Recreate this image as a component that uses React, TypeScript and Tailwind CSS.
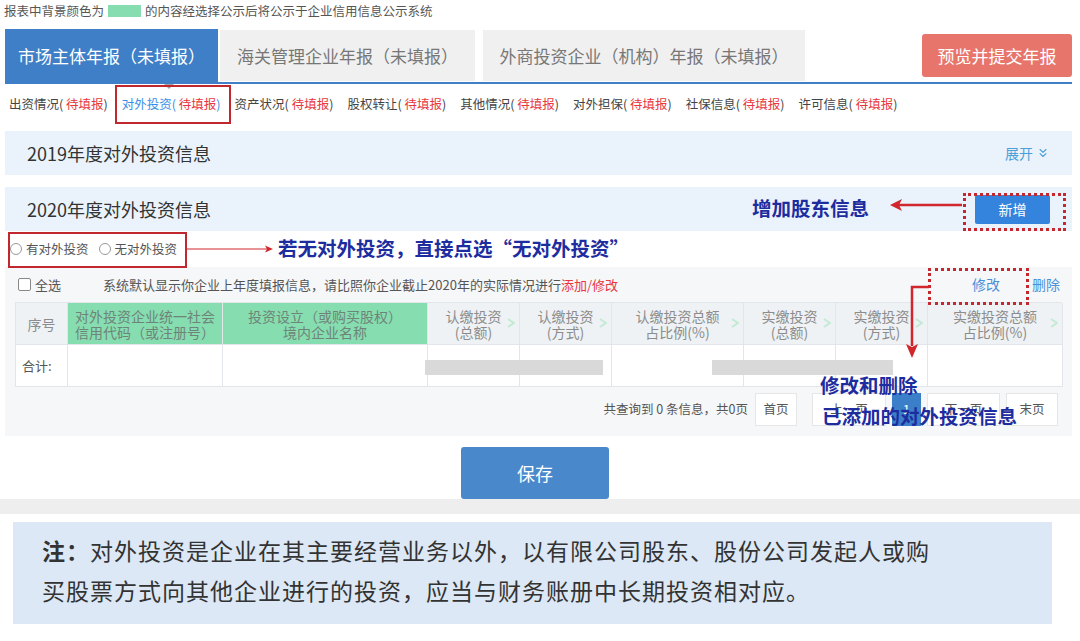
import { ChevronsDown } from 'lucide-react'

const subNav = ['出资情况', '对外投资', '资产状况', '股权转让', '其他情况', '对外担保', '社保信息', '许可信息']

const columns = [
  { lines: ['序号'], green: false, sort: false },
  { lines: ['对外投资企业统一社会', '信用代码（或注册号）'], green: true, sort: false },
  { lines: ['投资设立（或购买股权）', '境内企业名称'], green: true, sort: false },
  { lines: ['认缴投资', '(总额)'], green: false, sort: true },
  { lines: ['认缴投资', '(方式)'], green: false, sort: true },
  { lines: ['认缴投资总额', '占比例(%)'], green: false, sort: true },
  { lines: ['实缴投资', '(总额)'], green: false, sort: true },
  { lines: ['实缴投资', '(方式)'], green: false, sort: true },
  { lines: ['实缴投资总额', '占比例(%)'], green: false, sort: true },
]

const annoText = 'absolute whitespace-nowrap text-[19.5px] font-bold leading-[24px] text-[#1d2c9e]'

function SortMark() {
  return (
    <svg className="absolute right-[4px] top-[15px]" width="8" height="10" viewBox="0 0 8 10">
      <path d="M1 1 L7 5 L1 9" fill="none" stroke="#c3ead3" strokeWidth="2" />
    </svg>
  )
}

export default function App() {
  return (
    <div className="relative h-[641px] w-[1080px] overflow-hidden bg-white font-['Noto_Sans_CJK_SC',sans-serif] text-[#333]">
      <div className="pl-[5px] pr-[8px]">
        {/* 顶部说明 */}
        <div className="flex h-[22px] items-center text-[12.5px] text-[#555]">
          <span className="-ml-[1px]">报表中背景颜色为</span>
          <span className="ml-[4px] mr-[4px] inline-block h-[12px] w-[33px] bg-[#86ddb0]" />
          <span>的内容经选择公示后将公示于企业信用信息公示系统</span>
        </div>

        {/* 年报标签 */}
        <div className="mt-[7px] flex h-[55px] border-b-2 border-[#3f7fc8]">
          <div className="flex w-[213px] items-center justify-center bg-[#3f7fc8] text-[17px] text-white">
            市场主体年报（未填报）
          </div>
          <div className="ml-[2px] mt-[1px] flex h-[51px] w-[255px] items-center justify-center bg-[#f0f0f0] text-[17px] text-[#777]">
            海关管理企业年报（未填报）
          </div>
          <div className="ml-[8px] mt-[1px] flex h-[51px] w-[322px] items-center justify-center bg-[#f0f0f0] text-[17px] text-[#777]">
            外商投资企业（机构）年报（未填报）
          </div>
          <button
            type="button"
            className="ml-auto mt-[5px] h-[43px] w-[150px] rounded-[3px] bg-[#e8756c] text-[17px] text-white"
          >
            预览并提交年报
          </button>
        </div>

        {/* 子栏目 */}
        <div className="flex h-[41px] items-center gap-[14px] pl-[4px] text-[12.5px] text-[#444]">
          {subNav.map((item) => (
            <span key={item} className={item === '对外投资' ? 'text-[#3a8ee6]' : ''}>
              {item}( <span className="text-[#e8363c]">待填报</span>)
            </span>
          ))}
        </div>

        {/* 2019 */}
        <div className="mt-[6px] flex h-[44px] items-center justify-between bg-[#eaf3fb] pl-[22px] pr-[22px]">
          <span className="text-[18px] text-[#333]">2019年度对外投资信息</span>
          <span className="flex items-center gap-[3px] text-[14px] text-[#4a9fd8]">
            展开
            <ChevronsDown size={14} strokeWidth={2} />
          </span>
        </div>

        {/* 2020 */}
        <div className="mt-[12px] flex h-[44px] items-center justify-between bg-[#eaf3fb] pl-[22px] pr-[22px]">
          <span className="text-[18px] text-[#333]">2020年度对外投资信息</span>
          <button type="button" className="h-[29px] w-[75px] rounded-[2px] bg-[#3483dc] text-[14px] text-white">
            新增
          </button>
        </div>

        {/* 单选 */}
        <div className="flex h-[36px] items-center pl-[5px] text-[12.5px] text-[#555]">
          <span className="inline-block h-[12px] w-[12px] rounded-full border border-[#999] bg-white" />
          <span className="ml-[4px]">有对外投资</span>
          <span className="ml-[10px] inline-block h-[12px] w-[12px] rounded-full border border-[#999] bg-white" />
          <span className="ml-[4px]">无对外投资</span>
        </div>

        {/* 表格区 */}
        <div className="h-[169px] bg-[#f5f7f9] px-[10px]">
          <div className="flex h-[35px] items-center text-[13px] text-[#555]">
            <span className="ml-[3px] inline-block h-[13px] w-[13px] rounded-[2px] border border-[#888] bg-white" />
            <span className="ml-[4px]">全选</span>
            <span className="ml-[42px]">
              系统默认显示你企业上年度填报信息，请比照你企业截止2020年的实际情况进行
              <span className="text-[#e8363c]">添加/修改</span>
            </span>
            <span className="ml-auto text-[14px] text-[#4a90d9]">修改</span>
            <span className="ml-[32px] mr-[2px] text-[14px] text-[#4a90d9]">删除</span>
          </div>

          <div className="grid grid-cols-[52px_155px_205px_92px_92px_132px_92px_92px_135px] border-l border-t border-[#e2e6ea]">
            {columns.map((col, i) => (
              <div
                key={i}
                className={`relative flex h-[42px] flex-col items-center justify-center border-b border-r border-[#e2e6ea] text-[14px] leading-[16px] ${
                  col.green ? 'bg-[#86ddb0] text-[#6f8479]' : 'bg-[#eef2f5] text-[#8c8c8c]'
                }`}
              >
                {col.lines.map((l) => (
                  <span key={l}>{l}</span>
                ))}
                {col.sort && <SortMark />}
              </div>
            ))}
            {columns.map((_, i) => (
              <div
                key={`b${i}`}
                className="flex h-[42px] items-center border-b border-r border-[#e2e6ea] bg-white pl-[6px] text-[13px] text-[#555]"
              >
                {i === 0 ? '合计:' : ''}
              </div>
            ))}
          </div>

          <div className="mt-[6px] flex h-[33px] items-center justify-end gap-[6px] pr-[4px] text-[12.5px] text-[#555]">
            <span className="mr-[1px]">共查询到 0 条信息，共0页</span>
            <span className="flex h-[33px] w-[42px] items-center justify-center border border-[#e6e6e6] bg-white">首页</span>
            <span className="ml-[9px] flex h-[33px] w-[74px] items-center justify-center border border-[#e6e6e6] bg-white">上一页</span>
            <span className="flex h-[33px] w-[29px] items-center justify-center bg-[#3a7fc8] text-white">1</span>
            <span className="flex h-[33px] w-[73px] items-center justify-center border border-[#e6e6e6] bg-white">下一页</span>
            <span className="flex h-[33px] w-[52px] items-center justify-center border border-[#e6e6e6] bg-white">末页</span>
          </div>
        </div>

        <div className="h-[63px] pt-[11px]">
          <button
            type="button"
            className="ml-[456px] h-[52px] w-[148px] rounded-[3px] bg-[#4a88cc] text-[18px] text-white"
          >
            保存
          </button>
        </div>
      </div>

      <div className="h-[15px] bg-[#eeeeee]" />

      <div className="ml-[13px] mt-[8px] h-[102px] w-[1039px] bg-[#dce8f5] pl-[29px] pt-[8px] text-[23px] leading-[40px] tracking-[1px] text-[#333]">
        <p>
          <span className="font-bold">注：</span>对外投资是企业在其主要经营业务以外，以有限公司股东、股份公司发起人或购
        </p>
        <p>买股票方式向其他企业进行的投资，应当与财务账册中长期投资相对应。</p>
      </div>

      {/* 标注层 */}
      <span className="absolute left-[164px] top-[84px] h-0 w-0 border-x-[5px] border-t-[5px] border-x-transparent border-t-[#9aa4ad]" />
      <div className="absolute left-[115px] top-[85px] h-[39px] w-[116px] border-2 border-[#c0282e]" />

      <span className={`${annoText} left-[752px] top-[196px]`}>增加股东信息</span>
      <svg className="absolute left-[888px] top-[198px]" width="76" height="14" viewBox="0 0 76 14">
        <line x1="74" y1="7" x2="8" y2="7" stroke="#d0262c" strokeWidth="2.5" />
        <path d="M2 7 L14 1 L11 7 L14 13 Z" fill="#d0262c" />
      </svg>
      <div className="absolute left-[963px] top-[193px] h-[38px] w-[103px] border-[3px] border-dotted border-[#c4282e]" />

      <div className="absolute left-[8px] top-[232px] h-[36px] w-[179px] border-2 border-[#c0282e]" />
      <svg className="absolute left-[187px] top-[244px]" width="88" height="10" viewBox="0 0 88 10">
        <line x1="0" y1="5" x2="82" y2="5" stroke="#d0262c" strokeWidth="1.2" />
        <path d="M86 5 L78 1.5 L80 5 L78 8.5 Z" fill="#d0262c" />
      </svg>
      <span className={`${annoText} left-[278px] top-[236px]`}>若无对外投资，直接点选“无对外投资”</span>

      <div className="absolute left-[928px] top-[268px] h-[37px] w-[101px] border-[3px] border-dotted border-[#c4282e]" />
      <svg className="absolute left-[904px] top-[282px]" width="26" height="78" viewBox="0 0 26 78">
        <path d="M25 5 H8 V64" fill="none" stroke="#d0262c" strokeWidth="2.5" />
        <path d="M8 76 L2 62 L8 65 L14 62 Z" fill="#d0262c" />
      </svg>

      <div className="absolute left-[425px] top-[360px] h-[15px] w-[178px] bg-[#d9d9d9]" />
      <div className="absolute left-[712px] top-[360px] h-[15px] w-[181px] bg-[#d9d9d9]" />

      <span className={`${annoText} left-[820px] top-[373px]`}>修改和删除</span>
      <span className={`${annoText} left-[822px] top-[404px]`}>已添加的对外投资信息</span>
    </div>
  )
}
